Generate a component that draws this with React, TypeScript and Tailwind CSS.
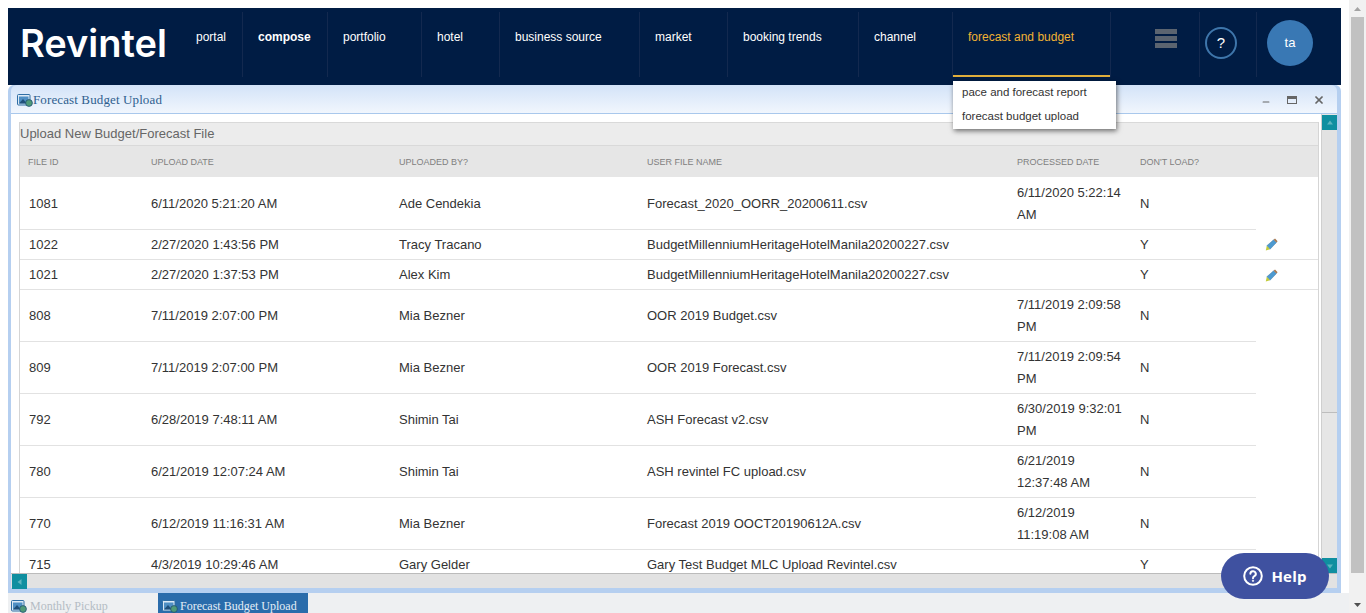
import React from "react";
import { Minus, X } from "lucide-react";

const navItems = [
  { label: "portal", cls: "w-[62px]" },
  { label: "compose", cls: "w-[85px] font-bold" },
  { label: "portfolio", cls: "w-[94px]" },
  { label: "hotel", cls: "w-[78px]" },
  { label: "business source", cls: "w-[140px]" },
  { label: "market", cls: "w-[88px]" },
  { label: "booking trends", cls: "w-[131px]" },
  { label: "channel", cls: "w-[94px]" },
];

const rows = [
  { id: "1081", date: "6/11/2020 5:21:20 AM", by: "Ade Cendekia", file: "Forecast_2020_OORR_20200611.csv", done: ["6/11/2020 5:22:14", "AM"], load: "N" },
  { id: "1022", date: "2/27/2020 1:43:56 PM", by: "Tracy Tracano", file: "BudgetMillenniumHeritageHotelManila20200227.csv", load: "Y", edit: true },
  { id: "1021", date: "2/27/2020 1:37:53 PM", by: "Alex Kim", file: "BudgetMillenniumHeritageHotelManila20200227.csv", load: "Y", edit: true },
  { id: "808", date: "7/11/2019 2:07:00 PM", by: "Mia Bezner", file: "OOR 2019 Budget.csv", done: ["7/11/2019 2:09:58", "PM"], load: "N" },
  { id: "809", date: "7/11/2019 2:07:00 PM", by: "Mia Bezner", file: "OOR 2019 Forecast.csv", done: ["7/11/2019 2:09:54", "PM"], load: "N" },
  { id: "792", date: "6/28/2019 7:48:11 AM", by: "Shimin Tai", file: "ASH Forecast v2.csv", done: ["6/30/2019 9:32:01", "PM"], load: "N" },
  { id: "780", date: "6/21/2019 12:07:24 AM", by: "Shimin Tai", file: "ASH revintel FC upload.csv", done: ["6/21/2019", "12:37:48 AM"], load: "N" },
  { id: "770", date: "6/12/2019 11:16:31 AM", by: "Mia Bezner", file: "Forecast 2019 OOCT20190612A.csv", done: ["6/12/2019", "11:19:08 AM"], load: "N" },
  { id: "715", date: "4/3/2019 10:29:46 AM", by: "Gary Gelder", file: "Gary Test Budget MLC Upload Revintel.csv", load: "Y", edit: true },
];

function WindowIcon() {
  return (
    <svg width="16" height="14" viewBox="0 0 16 14" className="shrink-0">
      <rect x="0.5" y="1.5" width="12.5" height="10.5" rx="1" fill="#dbe9f6" stroke="#2f6ea5" />
      <rect x="2" y="3.5" width="9.5" height="7" fill="#4f8fc4" />
      <path d="M2 10.5 L6 6 L10 10.5 Z" fill="#1f4f7a" />
      <circle cx="12" cy="10" r="3.4" fill="#4f9a78" stroke="#1e4f73" strokeWidth="0.8" />
    </svg>
  );
}

function Pencil() {
  return (
    <svg width="13" height="13" viewBox="0 0 13 13">
      <path d="M1.8 7.8 L8.6 1.8 L11.4 4.6 L5 11.2 Z" fill="#4d9ad0" stroke="#3a78a8" strokeWidth="0.5" />
      <path d="M8.6 1.8 L10 0.6 L12.6 3.2 L11.4 4.6 Z" fill="#a87850" />
      <path d="M1.8 7.8 L5 11.2 L0.8 12.4 Z" fill="#c3cc3a" />
    </svg>
  );
}

function ScrollBtn({ dir }: { dir: "up" | "down" | "left" }) {
  const d = dir === "up" ? "M4 1.5 L7 5.5 L1 5.5 Z" : dir === "down" ? "M1 2.5 L7 2.5 L4 6.5 Z" : "M5.5 1 L5.5 7 L1.5 4 Z";
  return (
    <div className="flex h-[15px] w-[15px] shrink-0 items-center justify-center bg-[#0f8fa0]">
      <svg width="8" height="8" viewBox="0 0 8 8">
        <path d={d} fill="#5cb5bf" />
      </svg>
    </div>
  );
}

function App() {
  return (
    <div className="relative flex h-[613px] w-[1366px] overflow-hidden bg-white font-['Liberation_Sans',Arial,sans-serif]">
      <div className="flex h-full w-[1349px] flex-col pt-2 pl-2">
        {/* Top nav */}
        <header className="relative z-20 flex h-[77px] w-[1333px] shrink-0 bg-[#001c44]">
          <div className="w-[173px] shrink-0 pt-[12px] pl-[12px] font-['Inter',sans-serif] text-[38px] leading-[46px] font-semibold text-white">
            Revintel
          </div>
          <nav className="flex text-[12px] text-white">
            {navItems.map((item) => (
              <div key={item.label} className={`mt-1 mb-2 flex border-r border-[#13294f] pt-[17px] pl-[15px] ${item.cls}`}>
                <span className="whitespace-nowrap leading-4">{item.label}</span>
              </div>
            ))}
            <div className="relative mt-1 mb-2 flex w-[158px] border-r border-[#13294f] pt-[17px] pl-[15px]">
              <span className="whitespace-nowrap leading-4 text-[#f2b233]">forecast and budget</span>
              <div className="absolute bottom-0 left-0 h-[2px] w-[157px] bg-[#e0ae3c]" />
              {/* Dropdown */}
              <div className="absolute top-[69px] left-0 w-[163px] bg-white pl-[9px] text-[11.5px] text-[#333] shadow-[1px_2px_5px_rgba(0,0,0,0.55)]">
                <div className="h-6 leading-[22px] whitespace-nowrap">pace and forecast report</div>
                <div className="h-6 leading-[22px] whitespace-nowrap">forecast budget upload</div>
              </div>
            </div>
          </nav>
          <div className="mt-1 mb-2 flex w-[89px] justify-end border-r border-[#13294f] pt-[17px] pr-[22px]">
            <div className="flex h-[19px] w-[22px] flex-col justify-between">
              <div className="h-[5px] bg-[#5b6470]" />
              <div className="h-[5px] bg-[#5b6470]" />
              <div className="h-[5px] bg-[#5b6470]" />
            </div>
          </div>
          <div className="mt-1 mb-2 flex w-[57px] items-start border-r border-[#13294f] pt-[15px] pl-[5px]">
            <div className="flex h-8 w-8 items-center justify-center rounded-full border-2 border-[#3e76ab] text-[15px] text-white">?</div>
          </div>
          <div className="flex flex-1 justify-start pt-[12px] pl-[10px]">
            <div className="flex h-[46px] w-[46px] items-center justify-center rounded-full bg-[#3978b4] text-[13px] text-white">ta</div>
          </div>
        </header>

        {/* Window */}
        <section className="flex h-[508px] w-[1333px] shrink-0 flex-col rounded-t-md border-y-0 border-r-[4px] border-b-[5px] border-l-[3px] border-[#b5cff0] bg-[#b5cff0]">
          <div className="flex h-[28px] shrink-0 items-center rounded-t-md bg-gradient-to-b from-[#d3e3f8] to-[#f1f6fd] pt-px pl-[6px] font-['Liberation_Serif',serif] text-[13px] tracking-[0.12px] text-[#2f5f8f]">
            <WindowIcon />
            <span>Forecast Budget Upload</span>
            <div className="ml-auto flex items-center gap-[16px] pr-[12px] text-[#666]">
              <Minus size={10} strokeWidth={2.5} className="mt-1" />
              <div className="h-[8px] w-[10px] border border-t-[3px] border-[#666]" />
              <X size={12} strokeWidth={3.5} />
            </div>
          </div>
          <div className="flex min-h-0 flex-1 flex-col border-t border-[#a9c8ec] bg-white">
            <div className="flex min-h-0 flex-1">
              <div className="min-w-0 flex-1 overflow-hidden pt-[8px] pl-[8px]">
                <div className="h-full w-[1300px] overflow-hidden border-x border-[#d5d5d5]">
                  <div className="h-[24px] border-y border-[#d9d9d9] bg-[#ececec] text-[13px] leading-[22px] text-[#666]">
                    Upload New Budget/Forecast File
                  </div>
                  <table className="w-full table-fixed border-collapse text-[13px] text-[#333]">
                    <colgroup>
                      <col className="w-[131px]" />
                      <col className="w-[248px]" />
                      <col className="w-[248px]" />
                      <col className="w-[370px]" />
                      <col className="w-[123px]" />
                      <col className="w-[116px]" />
                      <col />
                    </colgroup>
                    <thead>
                      <tr className="h-[31px] bg-[#e6e6e6] text-left text-[9px] text-[#808080] [&>th]:pt-[2px]">
                        <th className="pl-2 font-normal">FILE ID</th>
                        <th className="font-normal">UPLOAD DATE</th>
                        <th className="font-normal">UPLOADED BY?</th>
                        <th className="font-normal">USER FILE NAME</th>
                        <th className="font-normal">PROCESSED DATE</th>
                        <th className="font-normal">DON'T LOAD?</th>
                        <th />
                      </tr>
                    </thead>
                    <tbody>
                      {rows.map((r) => (
                        <tr key={r.id} className={`[&>td]:pt-[2px] ${r.done ? "h-[52px]" : "h-[30px]"}`}>
                          <td className="border-b border-[#e2e2e2] pl-[9px]">{r.id}</td>
                          <td className="border-b border-[#e2e2e2]">{r.date}</td>
                          <td className="border-b border-[#e2e2e2]">{r.by}</td>
                          <td className="border-b border-[#e2e2e2] whitespace-nowrap">{r.file}</td>
                          <td className="border-b border-[#e2e2e2] leading-[22px]">
                            {r.done?.map((t) => (
                              <div key={t} className="whitespace-nowrap">{t}</div>
                            ))}
                          </td>
                          <td className="border-b border-[#e2e2e2]">{r.load}</td>
                          {r.edit && (
                            <td className="border-b border-[#e2e2e2] pl-[9px]">
                              <Pencil />
                            </td>
                          )}
                        </tr>
                      ))}
                    </tbody>
                  </table>
                </div>
              </div>
              {/* inner vertical scrollbar */}
              <div className="ml-[2px] flex w-[16px] shrink-0 flex-col border-l border-[#cfcfcf] bg-[#e6e6e6] pt-[1px]">
                <ScrollBtn dir="up" />
                <div className="w-full flex-1">
                  <div className="h-[283px] border-b border-[#bdbdbd] bg-[#e2e2e2]" />
                </div>
                <ScrollBtn dir="down" />
              </div>
            </div>
            <div className="flex h-[15px] shrink-0 border-t border-[#bbbbbb] bg-[#e2e2e2] pl-px">
              <ScrollBtn dir="left" />
            </div>
          </div>
        </section>

        {/* Task bar */}
        <footer className="flex min-h-0 flex-1 bg-[#eef0f2] font-['Liberation_Serif',serif] text-[12px]">
          <div className="flex w-[150px] items-center gap-[3px] pt-[5px] pl-[3px] text-[#b4bcc4]">
            <WindowIcon />
            <span className="whitespace-nowrap">Monthly Pickup</span>
          </div>
          <div className="flex w-[150px] items-center gap-[2px] bg-[#2a6cab] pt-[5px] pl-[4px] text-[#e4eef7]">
            <WindowIcon />
            <span className="whitespace-nowrap">Forecast Budget Upload</span>
          </div>
        </footer>
      </div>

      {/* Browser scrollbar */}
      <div className="flex h-full w-[17px] flex-col items-center bg-[#f1f1f1]">
        <div className="flex h-[17px] items-center text-[#a3a3a3]">
          <svg width="9" height="6" viewBox="0 0 9 6"><path d="M4.5 1 L8 5 L1 5 Z" fill="currentColor" /></svg>
        </div>
        <div className="h-[556px] w-[13px] bg-[#c1c1c1]" />
        <div className="mt-auto flex h-[17px] items-center text-[#505050]">
          <svg width="9" height="6" viewBox="0 0 9 6"><path d="M1 1 L8 1 L4.5 5 Z" fill="currentColor" /></svg>
        </div>
      </div>

      {/* Help widget */}
      <div className="absolute top-[553px] left-[1221px] z-30 flex h-[46px] w-[108px] items-center justify-center gap-[8px] rounded-full bg-[#3f51a0] font-['Open_Sans',sans-serif] text-[15px] font-bold tracking-[0.2px] text-white">
        <svg width="20" height="20" viewBox="0 0 20 20" fill="none" stroke="white" strokeWidth="2">
          <circle cx="10" cy="10" r="8.8" />
          <path d="M7.4 7.8 a2.7 2.6 0 1 1 3.9 2.4 c-0.9 0.5 -1.3 1 -1.3 2" strokeLinecap="round" />
          <circle cx="10" cy="14.8" r="0.7" fill="white" strokeWidth="0.8" />
        </svg>
        <span>Help</span>
      </div>
    </div>
  );
}

export default App;
